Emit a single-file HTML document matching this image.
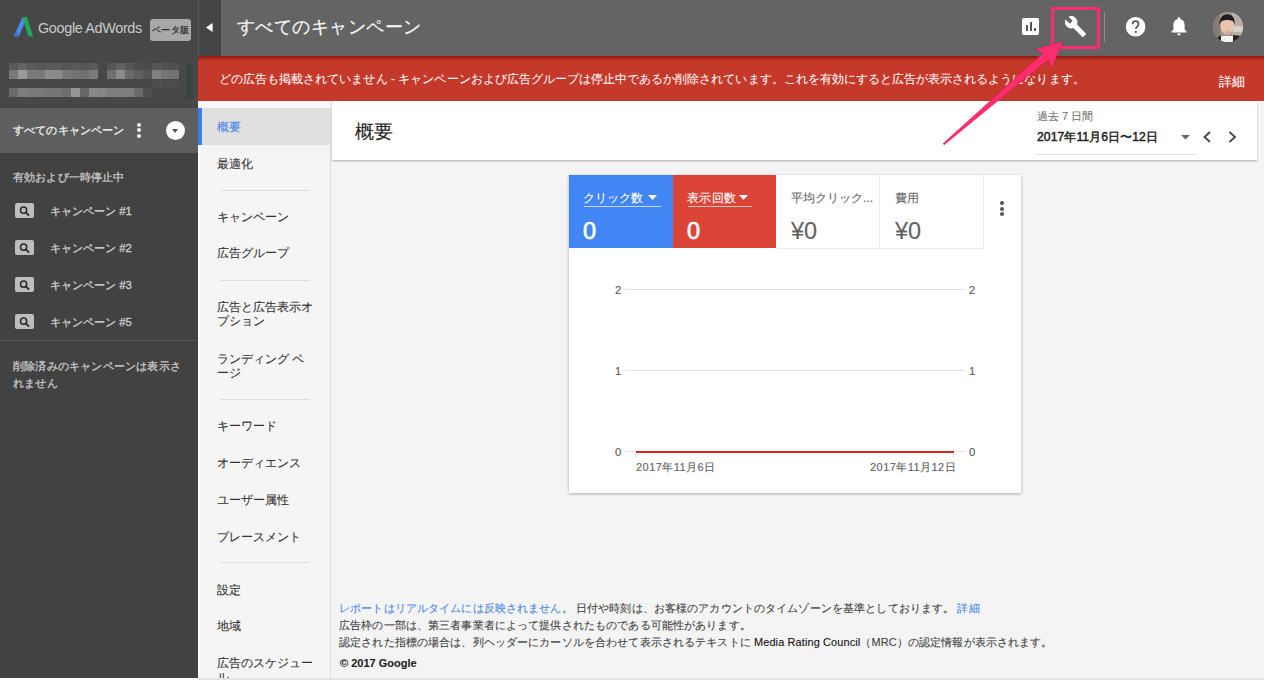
<!DOCTYPE html>
<html><head><meta charset="utf-8">
<style>
*{margin:0;padding:0;box-sizing:border-box}
html,body{width:1264px;height:680px;overflow:hidden}
body{font-family:"Liberation Sans",sans-serif;background:#f4f4f4;position:relative}
.abs{position:absolute}
.t{position:absolute;white-space:nowrap;line-height:1;-webkit-text-stroke:0.1px currentColor}
.w{-webkit-text-stroke:0.3px currentColor}
#side{left:0;top:0;width:198px;height:680px;background:#424242}
#sidetop{left:0;top:0;width:198px;height:108px;background:#474747}
#selrow{left:0;top:108px;width:198px;height:45px;background:#5e5e5e}
#hdr{left:198px;top:0;width:1066px;height:56px;background:#646464}
#coll{left:198px;top:0;width:23px;height:56px;background:#454545;border-left:1px solid #5a5a5a}
#banner{left:198px;top:56px;width:1066px;height:45px;background:linear-gradient(#9b1d15 0,#9b1d15 1.5px,#b22f22 3px,#c5392b 5px)}
#subnav{left:198px;top:101px;width:133px;height:579px;background:#f5f5f5;border-right:1px solid #dcdcdc}
#titlebar{left:332px;top:101px;width:925px;height:59px;background:#fff;box-shadow:0 1px 2px rgba(0,0,0,.3)}
#card{left:569px;top:175px;width:452px;height:318px;background:#fff;box-shadow:0 1px 3px rgba(0,0,0,.3)}
.sep{position:absolute;left:220px;width:89px;height:1px;background:#dedede}
.nav{position:absolute;left:216.5px;font-size:12px;color:#333;white-space:nowrap;line-height:14px;-webkit-text-stroke:0.1px currentColor}
</style></head><body>
<div id="side" class="abs"></div>
<div id="sidetop" class="abs"></div>
<div id="selrow" class="abs"></div>

<!-- logo -->
<svg class="abs" style="left:13px;top:16px" width="22" height="22" viewBox="0 0 22 22">
<polygon points="1,20.3 9.3,1.2 14,1.2 6,20.3" fill="#4a8af4"/>
<polygon points="9.3,1.2 14,1.2 20.2,20.3 15.3,20.3" fill="#21a65a"/>
<polygon points="1,20.3 3,15.5 6.8,18.5 6,20.3" fill="#3d7ad8"/>
</svg>
<div class="t" style="left:38px;top:21px;font-size:14.4px;color:#cacaca;letter-spacing:-0.33px;-webkit-text-stroke:0">Google AdWords</div>
<div class="abs" style="left:150px;top:19px;width:41px;height:22px;background:#a8a8a8;border-radius:3px"></div>
<div class="t" style="left:151.5px;top:26px;font-size:9px;color:#333;letter-spacing:0.5px;-webkit-text-stroke:0.3px #333">ベータ版</div>
<!-- blurred account -->
<div class="abs" style="left:0;top:0;width:198px;height:108px;filter:blur(0.6px)"><div class="abs" style="left:8.90px;top:63px;width:9.23px;height:7.4px;background:#585858"></div><div class="abs" style="left:17.83px;top:63px;width:9.23px;height:7.4px;background:#646464"></div><div class="abs" style="left:26.76px;top:63px;width:9.23px;height:7.4px;background:#5a5a5a"></div><div class="abs" style="left:35.69px;top:63px;width:9.23px;height:7.4px;background:#575757"></div><div class="abs" style="left:44.62px;top:63px;width:9.23px;height:7.4px;background:#5a5a5a"></div><div class="abs" style="left:53.55px;top:63px;width:9.23px;height:7.4px;background:#5a5a5a"></div><div class="abs" style="left:62.48px;top:63px;width:9.23px;height:7.4px;background:#565656"></div><div class="abs" style="left:71.41px;top:63px;width:9.23px;height:7.4px;background:#585858"></div><div class="abs" style="left:80.34px;top:63px;width:9.23px;height:7.4px;background:#565656"></div><div class="abs" style="left:89.27px;top:63px;width:9.23px;height:7.4px;background:#5a5a5a"></div><div class="abs" style="left:107.13px;top:63px;width:9.23px;height:7.4px;background:#555"></div><div class="abs" style="left:116.06px;top:63px;width:9.23px;height:7.4px;background:#626262"></div><div class="abs" style="left:124.99px;top:63px;width:9.23px;height:7.4px;background:#575757"></div><div class="abs" style="left:133.92px;top:63px;width:9.23px;height:7.4px;background:#4e4e4e"></div><div class="abs" style="left:142.85px;top:63px;width:9.23px;height:7.4px;background:#4c4c4c"></div><div class="abs" style="left:151.78px;top:63px;width:9.23px;height:7.4px;background:#565656"></div><div class="abs" style="left:160.71px;top:63px;width:9.23px;height:7.4px;background:#525252"></div><div class="abs" style="left:169.64px;top:63px;width:9.23px;height:7.4px;background:#505050"></div><div class="abs" style="left:8.90px;top:70.4px;width:9.23px;height:9.1px;background:#787878"></div><div class="abs" style="left:17.83px;top:70.4px;width:9.23px;height:9.1px;background:#9a9a9a"></div><div class="abs" style="left:26.76px;top:70.4px;width:9.23px;height:9.1px;background:#7a7a7a"></div><div class="abs" style="left:35.69px;top:70.4px;width:9.23px;height:9.1px;background:#7a7a7a"></div><div class="abs" style="left:44.62px;top:70.4px;width:9.23px;height:9.1px;background:#8c8c8c"></div><div class="abs" style="left:53.55px;top:70.4px;width:9.23px;height:9.1px;background:#8a8a8a"></div><div class="abs" style="left:62.48px;top:70.4px;width:9.23px;height:9.1px;background:#787878"></div><div class="abs" style="left:71.41px;top:70.4px;width:9.23px;height:9.1px;background:#747474"></div><div class="abs" style="left:80.34px;top:70.4px;width:9.23px;height:9.1px;background:#707070"></div><div class="abs" style="left:89.27px;top:70.4px;width:9.23px;height:9.1px;background:#7a7a7a"></div><div class="abs" style="left:107.13px;top:70.4px;width:9.23px;height:9.1px;background:#707070"></div><div class="abs" style="left:116.06px;top:70.4px;width:9.23px;height:9.1px;background:#8a8a8a"></div><div class="abs" style="left:124.99px;top:70.4px;width:9.23px;height:9.1px;background:#6a6a6a"></div><div class="abs" style="left:133.92px;top:70.4px;width:9.23px;height:9.1px;background:#606060"></div><div class="abs" style="left:142.85px;top:70.4px;width:9.23px;height:9.1px;background:#555555"></div><div class="abs" style="left:151.78px;top:70.4px;width:9.23px;height:9.1px;background:#808080"></div><div class="abs" style="left:160.71px;top:70.4px;width:9.23px;height:9.1px;background:#747474"></div><div class="abs" style="left:169.64px;top:70.4px;width:9.23px;height:9.1px;background:#727272"></div><div class="abs" style="left:151.78px;top:79.5px;width:9.23px;height:8.5px;background:#4e4e4e"></div><div class="abs" style="left:160.71px;top:79.5px;width:9.23px;height:8.5px;background:#4c4c4c"></div><div class="abs" style="left:169.64px;top:79.5px;width:9.23px;height:8.5px;background:#4c4c4c"></div><div class="abs" style="left:8.90px;top:88px;width:9.23px;height:9px;background:#6a6a6a"></div><div class="abs" style="left:17.83px;top:88px;width:9.23px;height:9px;background:#7e7e7e"></div><div class="abs" style="left:26.76px;top:88px;width:9.23px;height:9px;background:#7a7a7a"></div><div class="abs" style="left:35.69px;top:88px;width:9.23px;height:9px;background:#7a7a7a"></div><div class="abs" style="left:44.62px;top:88px;width:9.23px;height:9px;background:#767676"></div><div class="abs" style="left:53.55px;top:88px;width:9.23px;height:9px;background:#767676"></div><div class="abs" style="left:62.48px;top:88px;width:9.23px;height:9px;background:#6e6e6e"></div><div class="abs" style="left:71.41px;top:88px;width:9.23px;height:9px;background:#969696"></div><div class="abs" style="left:80.34px;top:88px;width:9.23px;height:9px;background:#666666"></div><div class="abs" style="left:89.27px;top:88px;width:9.23px;height:9px;background:#888888"></div><div class="abs" style="left:98.20px;top:88px;width:9.23px;height:9px;background:#868686"></div><div class="abs" style="left:107.13px;top:88px;width:9.23px;height:9px;background:#7e7e7e"></div><div class="abs" style="left:116.06px;top:88px;width:9.23px;height:9px;background:#7e7e7e"></div><div class="abs" style="left:124.99px;top:88px;width:9.23px;height:9px;background:#7e7e7e"></div><div class="abs" style="left:133.92px;top:88px;width:9.23px;height:9px;background:#6a6a6a"></div><div class="abs" style="left:142.85px;top:88px;width:9.23px;height:9px;background:#505050"></div><div class="abs" style="left:185.6px;top:63px;width:7px;height:36px;background:#3a4343"></div></div>
<!-- selected campaign -->
<div class="t w" style="left:13px;top:124.5px;font-size:11px;letter-spacing:0.15px;color:#f2f2f2">すべてのキャンペーン</div>
<div class="abs" style="left:137.4px;top:122.7px;width:4px;height:4px;border-radius:50%;background:#f2f2f2"></div>
<div class="abs" style="left:137.4px;top:128.4px;width:4px;height:4px;border-radius:50%;background:#f2f2f2"></div>
<div class="abs" style="left:137.4px;top:134.1px;width:4px;height:4px;border-radius:50%;background:#f2f2f2"></div>
<div class="abs" style="left:166px;top:121px;width:19px;height:19px;border-radius:50%;background:#fff"></div>
<div class="abs" style="left:172px;top:129px;width:0;height:0;border-left:3.5px solid transparent;border-right:3.5px solid transparent;border-top:4px solid #555"></div>
<div class="t w" style="left:13px;top:171.5px;font-size:11px;letter-spacing:0.15px;color:#c8c8c8">有効および一時停止中</div>
<div class="abs" style="left:15px;top:203px;width:18.5px;height:15.2px;background:#bdbdbd;border-radius:2px"></div>
<svg class="abs" style="left:15px;top:203px" width="19" height="16" viewBox="0 0 19 16"><circle cx="8.6" cy="7.2" r="3.1" fill="none" stroke="#2a2a2a" stroke-width="1.5"/><line x1="10.8" y1="9.4" x2="13.6" y2="12.2" stroke="#2a2a2a" stroke-width="1.7" stroke-linecap="round"/></svg>
<div class="t w" style="left:50px;top:206px;font-size:11.3px;color:#d0d0d0">キャンペーン #1</div>
<div class="abs" style="left:15px;top:240px;width:18.5px;height:15.2px;background:#bdbdbd;border-radius:2px"></div>
<svg class="abs" style="left:15px;top:240px" width="19" height="16" viewBox="0 0 19 16"><circle cx="8.6" cy="7.2" r="3.1" fill="none" stroke="#2a2a2a" stroke-width="1.5"/><line x1="10.8" y1="9.4" x2="13.6" y2="12.2" stroke="#2a2a2a" stroke-width="1.7" stroke-linecap="round"/></svg>
<div class="t w" style="left:50px;top:243px;font-size:11.3px;color:#d0d0d0">キャンペーン #2</div>
<div class="abs" style="left:15px;top:277px;width:18.5px;height:15.2px;background:#bdbdbd;border-radius:2px"></div>
<svg class="abs" style="left:15px;top:277px" width="19" height="16" viewBox="0 0 19 16"><circle cx="8.6" cy="7.2" r="3.1" fill="none" stroke="#2a2a2a" stroke-width="1.5"/><line x1="10.8" y1="9.4" x2="13.6" y2="12.2" stroke="#2a2a2a" stroke-width="1.7" stroke-linecap="round"/></svg>
<div class="t w" style="left:50px;top:280px;font-size:11.3px;color:#d0d0d0">キャンペーン #3</div>
<div class="abs" style="left:15px;top:314px;width:18.5px;height:15.2px;background:#bdbdbd;border-radius:2px"></div>
<svg class="abs" style="left:15px;top:314px" width="19" height="16" viewBox="0 0 19 16"><circle cx="8.6" cy="7.2" r="3.1" fill="none" stroke="#2a2a2a" stroke-width="1.5"/><line x1="10.8" y1="9.4" x2="13.6" y2="12.2" stroke="#2a2a2a" stroke-width="1.7" stroke-linecap="round"/></svg>
<div class="t w" style="left:50px;top:317px;font-size:11.3px;color:#d0d0d0">キャンペーン #5</div>
<div class="abs" style="left:0;top:340px;width:198px;height:1px;background:#555"></div>
<div class="t w" style="left:13px;top:358px;font-size:11px;color:#c8c8c8;line-height:16.5px;letter-spacing:0.2px">削除済みのキャンペーンは表示さ<br>れません</div>
<div id="hdr" class="abs"></div>
<div id="coll" class="abs"></div>
<div id="banner" class="abs"></div>

<svg class="abs" style="left:206px;top:22.5px" width="8" height="10"><polygon points="6.6,0 6.6,9 0,4.5" fill="#fff"/></svg>
<div class="t" style="left:237px;-webkit-text-stroke:0.2px #f5f5f5;top:18px;font-size:18px;letter-spacing:0.45px;color:#f5f5f5">すべてのキャンペーン</div>
<!-- bar chart icon -->
<div class="abs" style="left:1022px;top:18px;width:17px;height:17px;background:#fff;border-radius:2px"></div>
<div class="abs" style="left:1026px;top:25px;width:2px;height:6px;background:#555"></div>
<div class="abs" style="left:1030px;top:22px;width:2px;height:9px;background:#555"></div>
<div class="abs" style="left:1034px;top:28px;width:2px;height:3px;background:#555"></div>
<!-- wrench -->
<svg class="abs" style="left:1064px;top:15px" width="23" height="23" viewBox="0 0 24 24"><path fill="#fff" d="M22.7 19l-9.1-9.1c.9-2.300.4-5-1.500-6.900-2-2-5-2.400-7.400-1.300L9 6 6 9 1.600 4.700C.4 7.100.9 10.100 2.900 12.100c1.900 1.900 4.600 2.400 6.900 1.500l9.100 9.100c.4.400 1 .4 1.400 0l2.300-2.300c.5-.4.5-1.100.1-1.400z"/></svg>
<div class="abs" style="left:1051px;top:7px;width:49px;height:42px;border:3px solid #fd2b70"></div>
<div class="abs" style="left:1104px;top:12px;width:1px;height:30px;background:#8a8a8a"></div>
<!-- help -->
<svg class="abs" style="left:1125px;top:16px" width="22" height="22" viewBox="0 0 22 22"><circle cx="10.6" cy="10.8" r="9.8" fill="#fff"/><path d="M7.6 8.3 C7.6 6.3 9 5.2 10.6 5.2 C12.3 5.2 13.6 6.3 13.6 8 C13.6 10.2 10.8 10.4 10.8 13" fill="none" stroke="#555" stroke-width="1.7"/><circle cx="10.8" cy="15.9" r="1.1" fill="#555"/></svg>
<!-- bell -->
<svg class="abs" style="left:1169px;top:15px" width="20" height="22" viewBox="0 0 20 22"><path fill="#fff" d="M10 2.2c.8 0 1.300.6 1.300 1.200v.5c2.600.6 4.300 2.900 4.300 5.600v5.100l1.900 1.900v1H2.500v-1l1.900-1.900V9.500c0-2.700 1.700-5 4.300-5.600v-.5c0-.6.5-1.200 1.300-1.200zM8.200 18.600h3.600c0 1-.8 1.800-1.800 1.800s-1.800-.8-1.800-1.800z"/></svg>
<!-- avatar -->
<svg class="abs" style="left:1212px;top:11px" width="32" height="32" viewBox="0 0 32 32">
<defs><clipPath id="cc"><circle cx="16" cy="16" r="15.1"/></clipPath>
<filter id="bl" x="-20%" y="-20%" width="140%" height="140%"><feGaussianBlur stdDeviation="0.7"/></filter></defs>
<g clip-path="url(#cc)">
<rect x="0" y="0" width="32" height="32" fill="#9d948b"/>
<g filter="url(#bl)">
<rect x="0" y="0" width="8" height="32" fill="#857c74"/>
<rect x="20" y="0" width="12" height="32" fill="#b8b0a6"/>
<rect x="21" y="15" width="11" height="6" fill="#d6d1ca"/>
<path d="M1 30 L9 24 L12 34 L1 34Z" fill="#252323"/>
<path d="M30 25 L21 24 L19 34 L30 34Z" fill="#252323"/>
<path d="M9 25 L21 25 L21 32 L9 32Z" fill="#f6f4f1"/>
<ellipse cx="15.2" cy="15" rx="6.6" ry="8.6" fill="#e9c3aa"/>
<path d="M7.6 14 C7.2 7 11 3.2 15.5 3.2 C20 3.2 23.2 7 22.8 13.5 L21.5 10.5 C19 8.5 12 8.5 9 10.5 Z" fill="#1c1a1a"/>
<ellipse cx="15.3" cy="21.3" rx="2.8" ry="1.1" fill="#d39c92"/>
</g></g></svg>
<!-- banner text -->
<div class="t" style="-webkit-text-stroke:0.05px #fff;left:219px;top:73px;font-size:12px;letter-spacing:0.04px;color:#fff">どの広告も掲載されていません - キャンペーンおよび広告グループは停止中であるか削除されています。これを有効にすると広告が表示されるようになります。</div>
<div class="t" style="left:1219px;top:76px;font-size:12.8px;color:#fff">詳細</div>
<div id="subnav" class="abs"></div>

<div class="abs" style="left:198px;top:101px;width:133px;height:7px;background:#f7f7f7"></div>
<div class="abs" style="left:198px;top:108px;width:133px;height:37px;background:#e0e0e0"></div>
<div class="abs" style="left:198px;top:101px;width:2px;height:579px;background:#fcfcfc"></div>
<div class="abs" style="left:198px;top:108px;width:4px;height:37px;background:#3d7ef0"></div>
<div class="nav" style="top:120px;color:#4a86e8">概要</div>
<div class="nav" style="top:157px">最適化</div>
<div class="nav" style="top:209.7px">キャンペーン</div>
<div class="nav" style="top:246.2px">広告グループ</div>
<div class="nav" style="top:299.8px">広告と広告表示オ<br>プション</div>
<div class="nav" style="top:351.5px">ランディング ペ<br>ージ</div>
<div class="nav" style="top:418.6px">キーワード</div>
<div class="nav" style="top:456px">オーディエンス</div>
<div class="nav" style="top:492.7px">ユーザー属性</div>
<div class="nav" style="top:529.5px">プレースメント</div>
<div class="nav" style="top:582.5px">設定</div>
<div class="nav" style="top:619.3px">地域</div>
<div class="nav" style="top:656px">広告のスケジュー<br>ル</div>
<div class="sep" style="top:190px"></div>
<div class="sep" style="top:280px"></div>
<div class="sep" style="top:399px"></div>
<div class="sep" style="top:562px"></div>
<div class="abs" style="left:198px;top:678px;width:1066px;height:2px;background:#e3e3e3"></div>
<div class="abs" style="left:0;top:678px;width:198px;height:2px;background:#fafafa"></div>
<div id="titlebar" class="abs"></div>

<div class="t" style="left:354.5px;top:122.5px;font-size:18.5px;color:#222">概要</div>
<div class="t" style="left:1037px;top:111px;font-size:11px;color:#757575">過去 7 日間</div>
<div class="t" style="left:1037px;top:130.5px;font-size:12.1px;color:#212121;-webkit-text-stroke:0.45px #212121;letter-spacing:0.1px">2017年11月6日〜12日</div>
<div class="abs" style="left:1036px;top:154px;width:160px;height:1px;background:#e0e0e0"></div>
<svg class="abs" style="left:1180.5px;top:135px" width="9" height="5"><polygon points="0,0 9,0 4.5,4.5" fill="#666"/></svg>
<svg class="abs" style="left:1201px;top:130px" width="12" height="14"><polyline points="9,2 3.5,7 9,12" fill="none" stroke="#444" stroke-width="1.8"/></svg>
<svg class="abs" style="left:1226px;top:130px" width="12" height="14"><polyline points="3.5,2 9,7 3.5,12" fill="none" stroke="#444" stroke-width="1.8"/></svg>
<div id="card" class="abs"></div>

<div class="abs" style="left:569px;top:175px;width:104px;height:73px;background:#4285f4"></div>
<div class="abs" style="left:673px;top:175px;width:103px;height:73px;background:#db4437"></div>
<div class="abs" style="left:776px;top:175px;width:104px;height:74px;border-right:1px solid #ececec;border-bottom:1px solid #ececec"></div>
<div class="abs" style="left:880px;top:175px;width:104px;height:74px;border-right:1px solid #ececec;border-bottom:1px solid #ececec"></div>
<div class="t" style="left:582.5px;top:191.5px;font-size:12px;color:#fff">クリック数</div>
<svg class="abs" style="left:648px;top:195px" width="9" height="5"><polygon points="0,0 9,0 4.5,5" fill="#fff"/></svg>
<div class="abs" style="left:584px;top:206px;width:77px;height:1px;background:rgba(255,255,255,.7)"></div>
<div class="t" style="left:687px;top:191.5px;font-size:12px;letter-spacing:0.3px;color:#fff">表示回数</div>
<svg class="abs" style="left:739px;top:195px" width="9" height="5"><polygon points="0,0 9,0 4.5,5" fill="#fff"/></svg>
<div class="abs" style="left:688px;top:206px;width:64px;height:1px;background:rgba(255,255,255,.7)"></div>
<div class="t" style="left:583px;top:219.5px;font-size:23.5px;color:#fff;-webkit-text-stroke:0.7px #fff">0</div>
<div class="t" style="left:687px;top:219.5px;font-size:23.5px;color:#fff;-webkit-text-stroke:0.7px #fff">0</div>
<div class="t" style="left:791px;top:192px;font-size:12.2px;color:#666">平均クリック...</div>
<div class="t" style="left:895px;top:192px;font-size:12.2px;color:#666">費用</div>
<div class="t" style="left:791px;top:219.5px;font-size:23.5px;color:#616161">¥0</div>
<div class="t" style="left:895px;top:219.5px;font-size:23.5px;color:#616161">¥0</div>
<div class="abs" style="left:1000.2px;top:201.3px;width:4px;height:4px;border-radius:50%;background:#555"></div>
<div class="abs" style="left:1000.2px;top:206.5px;width:4px;height:4px;border-radius:50%;background:#555"></div>
<div class="abs" style="left:1000.2px;top:211.7px;width:4px;height:4px;border-radius:50%;background:#555"></div>
<!-- chart -->
<div class="abs" style="left:625px;top:289px;width:340px;height:1px;background:#e0e0e0"></div>
<div class="abs" style="left:625px;top:370px;width:340px;height:1px;background:#e0e0e0"></div>
<div class="abs" style="left:625px;top:451px;width:340px;height:1px;background:#e0e0e0"></div>
<div class="abs" style="left:636px;top:451px;width:318px;height:2px;background:#e0221c"></div>
<div class="abs" style="left:635px;top:453px;width:1px;height:4px;background:#ddd"></div>
<div class="abs" style="left:953px;top:453px;width:1px;height:4px;background:#ddd"></div>
<div class="t" style="left:615px;top:284.5px;font-size:11.3px;color:#555">2</div>
<div class="t" style="left:615px;top:365.5px;font-size:11.3px;color:#555">1</div>
<div class="t" style="left:615px;top:447px;font-size:11.3px;color:#555">0</div>
<div class="t" style="left:969px;top:284.5px;font-size:11.3px;color:#555">2</div>
<div class="t" style="left:969px;top:365.5px;font-size:11.3px;color:#555">1</div>
<div class="t" style="left:969px;top:447px;font-size:11.3px;color:#555">0</div>
<div class="t" style="left:636px;top:462px;font-size:11px;letter-spacing:0.45px;color:#616161">2017年11月6日</div>
<div class="t" style="left:870px;top:462px;font-size:11px;letter-spacing:0.45px;color:#616161">2017年11月12日</div>
<!-- footer -->
<div class="t" style="left:339px;top:600px;font-size:10.93px;color:#424242;line-height:17px;letter-spacing:0.13px"><span style="color:#4a86e8">レポートはリアルタイムには反映されません。</span> 日付や時刻は、お客様のアカウントのタイムゾーンを基準としております。 <span style="color:#4a86e8">詳細</span><br>広告枠の一部は、第三者事業者によって提供されたものである可能性があります。<br>認定された指標の場合は、列ヘッダーにカーソルを合わせて表示されるテキストに <span style="color:#111">Media Rating Council</span>（MRC）の認定情報が表示されます。</div>
<div class="t" style="left:340px;top:658px;font-size:11px;color:#222;font-weight:bold">© 2017 Google</div>

<svg class="abs" style="left:0;top:0" width="1264" height="680" viewBox="0 0 1264 680">
<polygon points="1063.0,41.5 1051.35,69.2 1048.3,59.68 944.13,144.94 942.95,143.57 1042.83,53.31 1034.5,49.0" fill="#fe2d6f" stroke="rgba(90,0,30,0.25)" stroke-width="0.6" stroke-linejoin="round"/>
</svg>
</body></html>
